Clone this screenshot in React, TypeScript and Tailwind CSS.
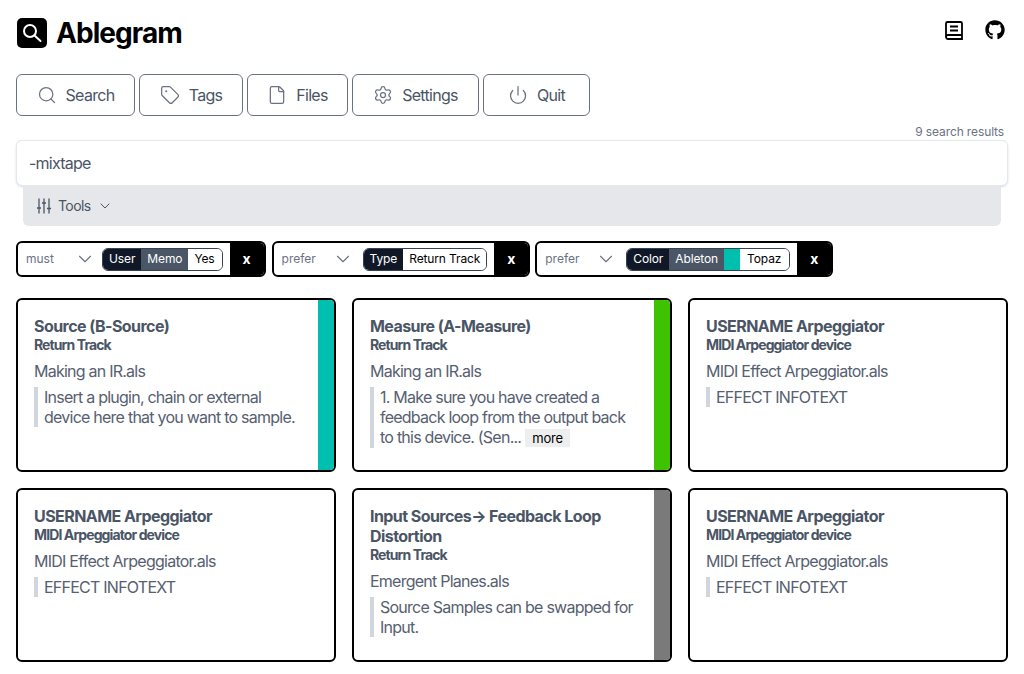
import React from 'react';
import { ChevronDown, File, Power, Search, Settings, Tag } from 'lucide-react';
import { FaGithub } from 'react-icons/fa';

const navItems = [
  { label: 'Search', icon: Search, width: 'w-[119px]' },
  { label: 'Tags', icon: Tag, width: 'w-[104px]' },
  { label: 'Files', icon: File, width: 'w-[101px]' },
  { label: 'Settings', icon: Settings, width: 'w-[127px]' },
  { label: 'Quit', icon: Power, width: 'w-[107px]' },
];

const FilterBox: React.FC<{ mode: string; children: React.ReactNode }> = ({ mode, children }) => (
  <div className="flex h-9 items-stretch overflow-hidden rounded-md border-2 border-black bg-white">
    <div
      className={`flex items-center justify-between pl-2 text-xs text-gray-500 ${
        mode === 'must' ? 'w-[84px] pr-[6px]' : 'w-[89px] pr-[9px]'
      }`}
    >
      <span>{mode}</span>
      <ChevronDown className="h-[22px] w-[22px]" strokeWidth={1.25} />
    </div>
    <div className="flex items-center pr-[7px]">{children}</div>
    <div className="flex w-[34px] items-center justify-center bg-black text-sm font-bold text-white">x</div>
  </div>
);

const Segment: React.FC<{ className?: string; children?: React.ReactNode }> = ({ className, children }) => (
  <span className={`flex h-full items-center px-[6px] ${className}`}>{children}</span>
);

interface CardProps {
  title: React.ReactNode;
  type: string;
  file: string;
  info: React.ReactNode;
  color?: string;
}

const Card: React.FC<CardProps> = ({ title, type, file, info, color }) => (
  <div className="flex h-[174px] overflow-hidden rounded-md border-2 border-black bg-white">
    <div className="min-w-0 flex-1 pl-4 pr-4 pt-[16px] text-gray-600">
      <h3 className="text-base leading-5 font-bold tracking-[-0.56px]">{title}</h3>
      <div className="text-sm leading-[18px] font-bold tracking-[-0.9px]">{type}</div>
      <div className="mt-[7px] text-base leading-5 tracking-[-0.76px] text-[#566070]">{file}</div>
      <div className="mt-[6px] border-l-4 border-gray-300 pl-[6px] text-base leading-5 tracking-[-0.76px] text-[#566070]">
        {info}
      </div>
    </div>
    {color && <div className={`w-4 shrink-0 ${color}`} />}
  </div>
);

export default function App() {
  return (
    <div className="min-h-screen bg-white px-4 font-['Inter',sans-serif]">
      {/* Header */}
      <header className="flex h-[74px] items-start justify-between pt-[17px]">
        <div className="ml-px flex items-center gap-[9px]">
          <div className="h-[30px] w-[30px] rounded-[5px] bg-black">
            <svg className="h-[30px] w-[30px]" viewBox="0 0 30 30" fill="none" stroke="white" strokeWidth="2" strokeLinecap="round">
              <circle cx="13" cy="13" r="6" />
              <path d="M17.5 17.5L23.5 23" />
            </svg>
          </div>
          <h1 className="text-[28px] leading-8 font-bold tracking-[-0.93px] text-black">Ablegram</h1>
        </div>
        <div className="flex items-center gap-[21px] pr-[3px] pt-[3px]">
          <svg className="h-5 w-5" viewBox="0 0 20 20" fill="none" stroke="black" strokeWidth="1.8">
            <path d="M2 17V3.5A1.5 1.5 0 0 1 3.5 2h13A1.5 1.5 0 0 1 18 3.5V19H4a2 2 0 0 1-2-2a2 2 0 0 1 2-2h14" />
            <path d="M6 6.5h8M6 10.5h8" />
          </svg>
          <FaGithub className="h-5 w-5 text-black" />
        </div>
      </header>

      {/* Nav */}
      <nav className="flex gap-1">
        {navItems.map(({ label, icon: Icon, width }) => (
          <button
            key={label}
            className={`flex h-[42px] items-center justify-center gap-[9px] rounded-md border border-gray-500 bg-white text-base tracking-[-0.7px] text-gray-600 ${width}`}
          >
            <Icon className="h-5 w-5 text-gray-500" strokeWidth={1.5} />
            <span>{label}</span>
          </button>
        ))}
      </nav>

      {/* Search */}
      <div className="flex h-6 items-end justify-end pr-[4px] text-xs tracking-[-0.12px] text-gray-500">9 search results</div>
      <div className="flex h-[46px] items-center rounded-md border border-gray-200 bg-white px-3 text-base tracking-[-0.76px] text-gray-600 shadow-sm">
        -mixtape
      </div>
      <div className="mx-[7px] flex h-10 items-center rounded-b-md bg-gray-200 pl-[14px] text-sm tracking-[-0.6px] text-gray-600">
        <svg className="h-4 w-[14px]" viewBox="0 0 14 16" fill="none" stroke="currentColor" strokeWidth="1.3">
          <path d="M2 0.5V15.5M7 0.5V15.5M12 0.5V15.5M0 10H4M5 5H9M10 10.5H14" />
        </svg>
        <span className="ml-[7px]">Tools</span>
        <ChevronDown className="ml-[6px] h-4 w-4" strokeWidth={1.5} />
      </div>

      {/* Filters */}
      <div className="mt-[15px] flex gap-[5px]">
        <div className="mr-px">
          <FilterBox mode="must">
            <div className="flex h-[23px] items-center overflow-hidden rounded-md border border-gray-700 text-xs tracking-[-0.12px]">
              <Segment className="bg-gray-900 text-white">User</Segment>
              <Segment className="bg-gray-600 text-white">Memo</Segment>
              <Segment className="bg-white pr-[7px] text-black">Yes</Segment>
            </div>
          </FilterBox>
        </div>
        <FilterBox mode="prefer">
          <div className="flex h-[23px] items-center overflow-hidden rounded-md border border-gray-700 text-xs tracking-[-0.12px]">
            <Segment className="bg-gray-900 text-white">Type</Segment>
            <Segment className="bg-white text-black">Return Track</Segment>
          </div>
        </FilterBox>
        <FilterBox mode="prefer">
          <div className="flex h-[23px] items-center overflow-hidden rounded-md border border-gray-700 text-xs tracking-[-0.12px]">
            <Segment className="bg-gray-900 text-white">Color</Segment>
            <Segment className="bg-gray-600 text-white">Ableton</Segment>
            <span className="h-full w-4 bg-[#00bfaf]" />
            <Segment className="bg-white pl-[7px] pr-[8px] text-black">Topaz</Segment>
          </div>
        </FilterBox>
      </div>

      {/* Results */}
      <div className="mt-[21px] grid grid-cols-3 gap-4">
        <Card
          title="Source (B-Source)"
          type="Return Track"
          file="Making an IR.als"
          info="Insert a plugin, chain or external device here that you want to sample."
          color="bg-[#00bfaf]"
        />
        <Card
          title="Measure (A-Measure)"
          type="Return Track"
          file="Making an IR.als"
          info={
            <>
              1. Make sure you have created a feedback loop from the output back to this device. (Sen...
              <span className="ml-[4px] bg-[#eeeeee] px-[7px] py-[1px] text-[13px] tracking-[-0.2px] text-black">more</span>
            </>
          }
          color="bg-[#3dc300]"
        />
        <Card title="USERNAME Arpeggiator" type="MIDI Arpeggiator device" file="MIDI Effect Arpeggiator.als" info="EFFECT INFOTEXT" />
        <Card title="USERNAME Arpeggiator" type="MIDI Arpeggiator device" file="MIDI Effect Arpeggiator.als" info="EFFECT INFOTEXT" />
        <Card
          title="Input Sources→ Feedback Loop Distortion"
          type="Return Track"
          file="Emergent Planes.als"
          info="Source Samples can be swapped for Input."
          color="bg-[#7a7a7a]"
        />
        <Card title="USERNAME Arpeggiator" type="MIDI Arpeggiator device" file="MIDI Effect Arpeggiator.als" info="EFFECT INFOTEXT" />
      </div>
    </div>
  );
}
